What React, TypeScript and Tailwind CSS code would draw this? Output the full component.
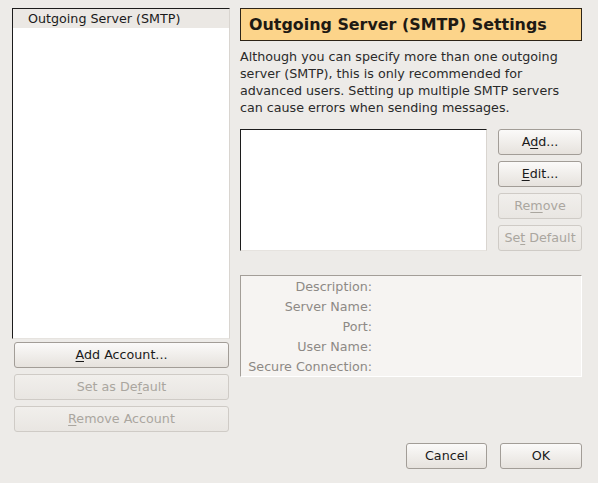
import React from "react";

interface ButtonProps {
  label: React.ReactNode;
  disabled?: boolean;
  className?: string;
}

const Button: React.FC<ButtonProps> = ({ label, disabled = false, className = "" }) => (
  <button
    className={`h-[26px] rounded-[3px] border text-[12.7px] leading-none bg-gradient-to-b ${
      disabled
        ? "border-[#cfcbc6] from-[#f1efec] to-[#e9e6e2] text-[#aaa69f]"
        : "border-[#a29d97] from-[#fbfaf9] to-[#e6e2dd] text-[#1a1a1a]"
    } ${className}`}
  >
    {label}
  </button>
);

const Mnemonic: React.FC<{ before?: string; k: string; after?: string }> = ({
  before = "",
  k,
  after = "",
}) => (
  <span>
    {before}
    <span className="underline underline-offset-2">{k}</span>
    {after}
  </span>
);

const detailLabels = ["Description:", "Server Name:", "Port:", "User Name:", "Secure Connection:"];

export default function App() {
  return (
    <div
      className="w-[598px] h-[483px] bg-[#edebe8] flex flex-col text-[#1a1a1a]"
      style={{ fontFamily: '"DejaVu Sans", sans-serif' }}
    >
      <div className="flex pt-[8px] pl-[12px] pr-[16px] gap-[10px]">
        {/* account tree */}
        <div className="w-[218px] flex flex-col">
          <div className="h-[331px] bg-white border border-t-[#1c1c1c] border-l-[#1c1c1c] border-r-[#d9d5d0] border-b-[#e6e3df]">
            <div className="h-[19px] bg-[#ebe8e4] pl-[15px] text-[12.7px] leading-[19px]">
              Outgoing Server (SMTP)
            </div>
          </div>
          <div className="flex flex-col gap-[6px] mt-[3px] pl-[2px] pr-[1px]">
            <Button label={<Mnemonic k="A" after="dd Account..." />} />
            <Button disabled label={<Mnemonic before="Set as De" k="f" after="ault" />} />
            <Button disabled label={<Mnemonic k="R" after="emove Account" />} />
          </div>
        </div>

        {/* smtp settings */}
        <div className="w-[342px] flex flex-col">
          <div className="h-[33px] bg-[#fcd48a] border border-[#2d2417] pl-[8px] text-[15.9px] font-bold leading-[31px] text-[#1e1a14]">
            Outgoing Server (SMTP) Settings
          </div>
          <p className="mt-[7px] text-[12.7px] leading-[17px] text-[#2a2a2a]">
            Although you can specify more than one outgoing server (SMTP), this is only recommended for
            advanced users. Setting up multiple SMTP servers can cause errors when sending messages.
          </p>
          <div className="flex mt-[13px] gap-[11px]">
            <div className="w-[247px] h-[122px] bg-white border border-t-[#1c1c1c] border-l-[#1c1c1c] border-r-[#d9d5d0] border-b-[#e6e3df]" />
            <div className="w-[84px] flex flex-col gap-[6px]">
              <Button label={<Mnemonic before="A" k="d" after="d..." />} />
              <Button label={<Mnemonic k="E" after="dit..." />} />
              <Button disabled label={<Mnemonic before="Re" k="m" after="ove" />} />
              <Button disabled label={<Mnemonic before="Se" k="t" after=" Default" />} />
            </div>
          </div>
          <div className="mt-[24px] h-[102px] bg-[#f6f4f2] border border-t-[#a39e98] border-l-[#a39e98] border-r-white border-b-white pt-[1px]">
            {detailLabels.map((label) => (
              <div key={label} className="flex h-[20px] items-center">
                <span className="w-[131px] text-right text-[12.7px] text-[#8d8985]">{label}</span>
              </div>
            ))}
          </div>
        </div>
      </div>

      <div className="flex justify-end gap-[13px] pr-[16px] mt-auto mb-[14px]">
        <Button label="Cancel" className="w-[81px]" />
        <Button label="OK" className="w-[82px]" />
      </div>
    </div>
  );
}
